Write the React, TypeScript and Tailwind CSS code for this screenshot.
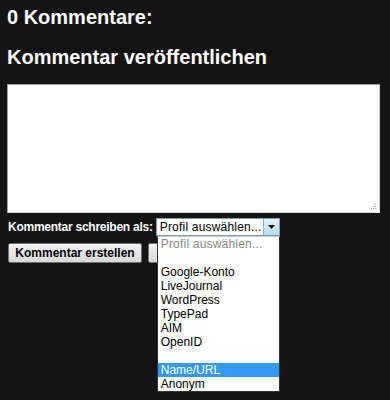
const options = [
	"",
	"Google-Konto",
	"LiveJournal",
	"WordPress",
	"TypePad",
	"AIM",
	"OpenID",
	"",
	"Name/URL",
	"Anonym",
];

export default function App() {
	return (
		<div className="w-[390px] h-[400px] overflow-hidden bg-[#141414] text-white font-['Liberation_Sans',Arial,sans-serif] px-[7px]">
			<h4 className="text-[20px] font-bold leading-[22px] pt-[6px]">0 Kommentare:</h4>
			<h4 className="text-[20px] font-bold leading-[22px] mt-[18px]">Kommentar veröffentlichen</h4>

			<div className="relative mt-[16px] w-[373px] h-[129px] bg-white border border-[#a0a0a0] border-b-[#d8d8d8] border-r-[#d8d8d8]">
				<svg className="absolute right-[2px] bottom-[2px]" width="8" height="8" viewBox="0 0 8 8">
					<rect x="6" y="2" width="1" height="1" fill="#aaa" />
					<rect x="4" y="4" width="1" height="1" fill="#aaa" />
					<rect x="6" y="4" width="1" height="1" fill="#aaa" />
					<rect x="2" y="6" width="1" height="1" fill="#aaa" />
					<rect x="4" y="6" width="1" height="1" fill="#aaa" />
					<rect x="6" y="6" width="1" height="1" fill="#aaa" />
				</svg>
			</div>

			<div className="relative flex items-center mt-[5px] h-[18px]">
				<span className="text-[12px] font-bold leading-[14px] tracking-[-0.25px] pl-[1px]">Kommentar schreiben als:</span>
				<div className="relative ml-[3px] w-[124px] h-[18px] bg-white border border-[#7f9db9] flex items-center">
					<span className="flex-1 text-[12px] text-black leading-[14px] pl-[3px] tracking-[0.2px]">Profil auswählen...</span>
					<div className="w-[16px] h-[16px] bg-gradient-to-b from-[#e4f1fb] to-[#b9dcf4] border-l border-[#8cb3d4] flex items-center justify-center">
						<svg width="7" height="4" viewBox="0 0 7 4">
							<path d="M0 0h7L3.5 4z" fill="#111" />
						</svg>
					</div>

					<div className="absolute left-[0px] top-[17px] w-[123px] bg-white border border-[#333] border-t-[#c8c8c8] z-10 text-[12px] leading-[14px] text-black">
						<div className="h-[14px] pl-[3px] text-[#8a8a8a] tracking-[0.2px]">Profil auswählen...</div>
						{options.map((o, i) => (
							<div
								key={i}
								className={
									o === "Name/URL"
										? "h-[14px] pl-[3px] bg-[#3399ff] text-white"
										: "h-[14px] pl-[3px]"
								}
							>
								{o}
							</div>
						))}
					</div>
				</div>
			</div>

			<div className="flex gap-[6px] mt-[7px] pl-[1px]">
				<button className="w-[134px] h-[20px] bg-gradient-to-b from-[#f4f4f4] to-[#d8d8d8] border border-[#707070] rounded-[2px] text-[12px] font-bold text-black leading-[14px]">
					Kommentar erstellen
				</button>
				<button className="w-[90px] h-[20px] bg-gradient-to-b from-[#f4f4f4] to-[#d8d8d8] border border-[#707070] rounded-[2px] text-[12px] font-bold text-black leading-[14px]">
					Vorschau
				</button>
			</div>
		</div>
	);
}
